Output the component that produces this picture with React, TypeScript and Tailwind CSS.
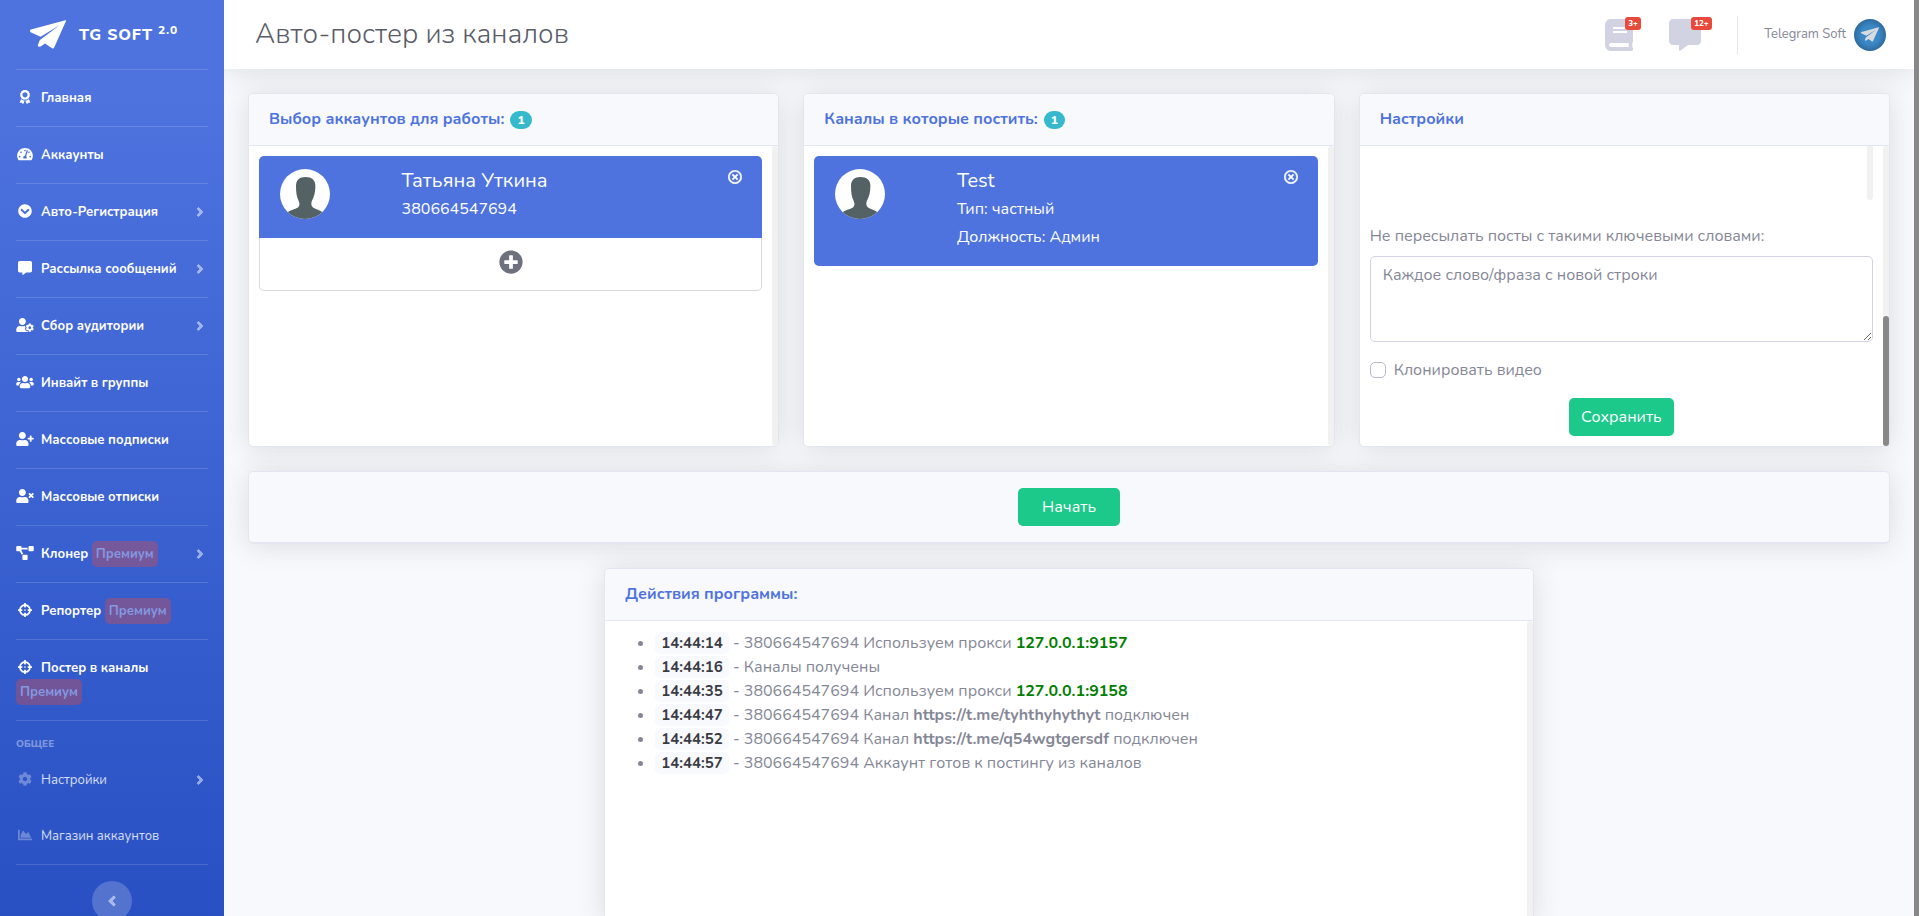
import React from 'react';
import {
    FaAngleLeft,
    FaAngleRight,
    FaAward,
    FaBook,
    FaChartArea,
    FaChevronCircleDown,
    FaCog,
    FaCommentAlt,
    FaCrosshairs,
    FaPlusCircle,
    FaProjectDiagram,
    FaRegTimesCircle,
    FaTachometerAlt,
    FaUserCog,
    FaUserPlus,
    FaUsers,
    FaUserTimes,
} from 'react-icons/fa';

interface MenuItem {
    label: string;
    icon: any;
    wide?: boolean;
    arrow?: boolean;
    premium?: boolean;
}

const mainMenu: MenuItem[] = [
    { label: 'Главная', icon: FaAward },
    { label: 'Аккаунты', icon: FaTachometerAlt, wide: true },
    { label: 'Авто-Регистрация', icon: FaChevronCircleDown, arrow: true },
    { label: 'Рассылка сообщений', icon: FaCommentAlt, arrow: true },
    { label: 'Сбор аудитории', icon: FaUserCog, wide: true, arrow: true },
    { label: 'Инвайт в группы', icon: FaUsers, wide: true },
    { label: 'Массовые подписки', icon: FaUserPlus, wide: true },
    { label: 'Массовые отписки', icon: FaUserTimes, wide: true },
    { label: 'Клонер', icon: FaProjectDiagram, wide: true, arrow: true, premium: true },
    { label: 'Репортер', icon: FaCrosshairs, premium: true },
    { label: 'Постер в каналы', icon: FaCrosshairs, premium: true },
];

const commonMenu: MenuItem[] = [
    { label: 'Настройки', icon: FaCog, arrow: true },
    { label: 'Магазин аккаунтов', icon: FaChartArea },
];

const logs: { time: string; text: React.ReactNode }[] = [
    { time: '14:44:14', text: <>380664547694 Используем прокси <b className="text-[#008000]">127.0.0.1:9157</b></> },
    { time: '14:44:16', text: 'Каналы получены' },
    { time: '14:44:35', text: <>380664547694 Используем прокси <b className="text-[#008000]">127.0.0.1:9158</b></> },
    { time: '14:44:47', text: <>380664547694 Канал <b>https://t.me/tyhthyhythyt</b> подключен</> },
    { time: '14:44:52', text: <>380664547694 Канал <b>https://t.me/q54wgtgersdf</b> подключен</> },
    { time: '14:44:57', text: '380664547694 Аккаунт готов к постингу из каналов' },
];

const Plane = ({ className }: { className: string }) => (
    <svg viewBox="0 0 36 29" fill="currentColor" className={className} aria-hidden="true">
        <path d="M35.4.2.9 9.5Q-.7 10.4.6 12.2L10.6 16.8 29.8 5 11.6 18.8Q9.4 20 9.2 21.4L7.8 25.6Q8 27.4 10.5 26.6L15 23.4 22 28.3Q23.7 29 24.2 27.6L36 .9Q36.1.1 35.4.2Z" />
    </svg>
);

const Silhouette = () => (
    <svg viewBox="0 0 50 50" className="size-[50px] rounded-full bg-white" role="img" aria-label="Аватар">
        <path
            fill="#546266"
            d="M25.5 8C31.5 8 35.6 11 35.4 17 35.4 23 34.2 28 31.8 32 30.8 35 31.5 37.2 33 38.5 36 40.5 40 41 43 43.5V50H7V43.5C10 41 15 40.5 18 38.5 19.5 37.2 20 35 18.7 32 16.5 28 16 23 16 17 16 11 19.5 8 25.5 8Z"
        />
    </svg>
);

const SidebarLink = ({ item, muted }: { item: MenuItem; muted?: boolean }) => (
    <a
        href="#"
        className={`mx-4 block py-4 text-[13px] leading-6 ${muted ? 'text-white/80' : 'border-b border-white/15 font-bold text-white'}`}
    >
        {item.arrow && (
            <span className="float-right flex h-6 w-4 items-center justify-center text-white/50">
                <FaAngleRight size={14} stroke="currentColor" strokeWidth={20} />
            </span>
        )}
        <span className={`mr-2 inline-flex w-[17px] justify-center align-[-2px] ${muted ? 'text-white/30' : ''}`}>
            <item.icon className={`h-[14px] shrink-0 ${item.wide ? 'w-[18px]' : 'w-[14px]'}`} />
        </span>
        {item.label}
        {item.premium && (
            <>
                {' '}
                <span className="rounded-[5px] bg-[#e74a3b]/35 px-1 py-1 text-[#8399e0]">Премиум</span>
            </>
        )}
    </a>
);

const Track = () => <div className="w-[6px] shrink-0 rounded-sm bg-[#f1f1f1]"></div>;

const Card = ({ title, count, children, className = '', track }: {
    title: string;
    count?: number;
    children: React.ReactNode;
    className?: string;
    track?: React.ReactNode;
}) => (
    <section className={`rounded-[5px] border border-[#e3e6f0] bg-white shadow-[0_2px_28px_rgba(58,59,69,0.15)] ${className}`}>
        <header className="flex h-[52px] items-center rounded-t-[5px] border-b border-[#e3e6f0] bg-[#f8f9fc] px-5">
            <h2 className="pb-[2px] font-bold text-[#4e73df]">{title}</h2>
            {count !== undefined && (
                <span className="ml-[6px] rounded-full bg-[#36b9cc] px-[7px] text-xs leading-[18px] font-extrabold text-white">{count}</span>
            )}
        </header>
        <div className="flex h-[300px]">
            <div className="min-w-0 flex-1 p-[10px]">{children}</div>
            {track ?? <Track />}
        </div>
    </section>
);

const Entry = ({ name, lines, className }: { name: string; lines: string[]; className: string }) => (
    <li className={`flex bg-[#4e73df] py-[13px] pr-5 pl-[21px] text-white ${className}`}>
        <div className="w-1/4 shrink-0">
            <Silhouette />
        </div>
        <div className="ml-[6px] min-w-0 flex-1">
            <h3 className="mb-1 text-xl leading-6">{name}</h3>
            {lines.map((l) => (
                <p key={l} className="mb-1">{l}</p>
            ))}
        </div>
        <button aria-label="Убрать" className="h-4 self-start">
            <FaRegTimesCircle size={14} stroke="currentColor" strokeWidth={20} />
        </button>
    </li>
);

export default function App() {
    return (
        <div className="flex h-screen overflow-hidden bg-[#f8f9fc] font-[Nunito,'Open_Sans',sans-serif] text-base text-[#858796]">
            {/* Sidebar */}
            <nav className="w-56 shrink-0 overflow-hidden bg-linear-to-b from-[#4e73df] from-10% to-[#224abe] to-115%">
                <a href="#" className="mx-4 flex h-[70px] items-center border-b border-white/15 pl-[14px] text-white">
                    <Plane className="h-[29px] w-9" />
                    <span className="ml-[13px] font-extrabold tracking-wider">
                        TG SOFT <sup className="text-xs">2.0</sup>
                    </span>
                </a>
                {mainMenu.map((item) => (
                    <SidebarLink key={item.label} item={item} />
                ))}
                <div className="mt-4 px-4 text-[10px] leading-[15px] font-extrabold text-white/40">ОБЩЕЕ</div>
                {commonMenu.map((item) => (
                    <SidebarLink key={item.label} item={item} muted />
                ))}
                <div className="mx-4 mb-4 border-b border-white/15"></div>
                <button aria-label="Свернуть меню" className="mx-auto flex size-10 items-center justify-center rounded-full bg-white/20 text-white/50">
                    <FaAngleLeft size={16} stroke="currentColor" strokeWidth={20} />
                </button>
            </nav>

            {/* Content */}
            <div className="min-w-0 flex-1 overflow-hidden">
                <header className="flex h-[69px] items-center bg-white pr-7 pl-[31px] shadow-[0_2px_28px_rgba(58,59,69,0.15)]">
                    <h1 className="flex-1 pb-[2px] text-[28px] font-light text-[#5a5c69]">Авто-постер из каналов</h1>
                    <button aria-label="Новости" className="relative mr-9 text-[#d1d3e2]">
                        <FaBook className="h-8 w-7" />
                        <span className="absolute -top-[2px] left-5 rounded-[3px] bg-[#e74a3b] px-[3px] text-[8px] leading-[13px] font-extrabold text-white">3+</span>
                    </button>
                    <button aria-label="Сообщения" className="relative mr-9 text-[#d1d3e2]">
                        <FaCommentAlt className="size-8" />
                        <span className="absolute -top-[2px] left-[22px] rounded-[3px] bg-[#e74a3b] px-[3px] text-[8px] leading-[13px] font-extrabold text-white">12+</span>
                    </button>
                    <div className="mr-[26px] h-[38px] w-px bg-[#e3e6f0]"></div>
                    <a href="#" className="flex items-center gap-2 text-[13px]">
                        Telegram Soft
                        <span className="flex size-8 items-center justify-center rounded-full bg-radial from-[#3b88c6] from-40% to-[#24507a] text-[#d9dcde]">
                            <Plane className="h-[15px] w-[18px]" />
                        </span>
                    </a>
                </header>

                <main className="flex flex-col gap-6 p-6">
                    <div className="grid grid-cols-3 gap-6">
                        <Card title="Выбор аккаунтов для работы:" count={1}>
                            <ul>
                                <Entry name="Татьяна Уткина" lines={['380664547694']} className="rounded-t-[5px]" />
                                <li className="flex justify-center rounded-b-[5px] border border-t-0 border-black/15 pt-3 pb-4 text-[#6e707e]">
                                    <button aria-label="Добавить аккаунт">
                                        <FaPlusCircle size={24} />
                                    </button>
                                </li>
                            </ul>
                        </Card>
                        <Card title="Каналы в которые постить:" count={1}>
                            <ul>
                                <Entry name="Test" lines={['Тип: частный', 'Должность: Админ']} className="rounded-[5px]" />
                            </ul>
                        </Card>
                        <Card
                            title="Настройки"
                            track={
                                <div className="flex w-[6px] shrink-0 flex-col justify-end rounded-sm bg-[#f1f1f1]">
                                    <div className="h-[130px] rounded-sm bg-[#888888]"></div>
                                </div>
                            }
                        >
                            <form className="-mt-[10px] flex flex-col" onSubmit={(e) => e.preventDefault()}>
                                <div className="mb-6 h-[54px] w-[6px] self-end rounded-b-sm bg-[#f1f1f1]"></div>
                                <label htmlFor="stop-words" className="mb-2">Не пересылать посты с такими ключевыми словами:</label>
                                <textarea
                                    id="stop-words"
                                    rows={3}
                                    placeholder="Каждое слово/фраза с новой строки"
                                    className="mb-4 block w-full resize rounded-[5px] border border-[#d1d3e2] bg-white px-3 py-[6px] text-base placeholder:text-[#858796]"
                                />
                                <div className="mb-4 flex items-center gap-2">
                                    <input
                                        id="clone-video"
                                        type="checkbox"
                                        className="size-4 appearance-none rounded-[5px] border border-[#b7b9cc] bg-white checked:bg-[#4e73df]"
                                    />
                                    <label htmlFor="clone-video">Клонировать видео</label>
                                </div>
                                <button className="self-center rounded-[5px] bg-[#1cc88a] px-3 py-[7px] text-white">Сохранить</button>
                            </form>
                        </Card>
                    </div>

                    <div className="flex justify-center rounded-[5px] border border-b-2 border-[#e3e6f0] bg-[#f8f9fc] py-4 shadow-[0_2px_28px_rgba(58,59,69,0.15)]">
                        <button className="rounded-[5px] bg-[#1cc88a] px-6 py-[7px] text-white">Начать</button>
                    </div>

                    <Card title="Действия программы:" className="w-[56.6%] self-center">
                        <ul className="list-disc pl-10">
                            {logs.map((l) => (
                                <li key={l.time}>
                                    <b className="rounded-[5px] bg-[#f8f9fc] px-[6px] py-[1px] text-[15px] text-[#3a3b45]">{l.time}</b> - {l.text}
                                </li>
                            ))}
                        </ul>
                    </Card>
                </main>
            </div>

            {/* Page scrollbar */}
            <div className="w-[5px] shrink-0 bg-[#888888]"></div>
        </div>
    );
}
